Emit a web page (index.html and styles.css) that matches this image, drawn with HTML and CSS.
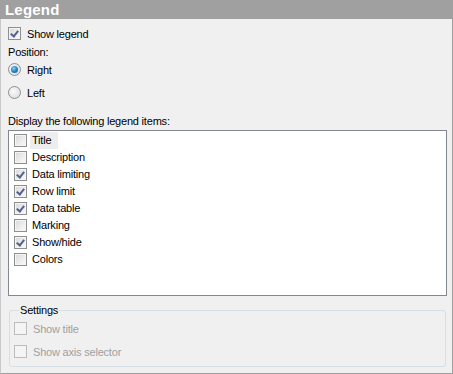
FILE: index.html
```html
<!DOCTYPE html>
<html lang="en">
<head>
  <meta charset="UTF-8">
  <title>Legend</title>
  <link rel="stylesheet" href="styles.css">
</head>
<body>
  <div class="panel">
    <!-- Header -->
    <div class="panel-title">Legend</div>

    <div class="panel-body">
      <div class="row show-legend">
        <span class="check checked"></span>
        <span class="text">Show legend</span>
      </div>

      <div class="label position-label">Position:</div>

      <div class="row radio-row first">
        <span class="radio selected"></span>
        <span class="text">Right</span>
      </div>
      <div class="row radio-row second">
        <span class="radio"></span>
        <span class="text">Left</span>
      </div>

      <div class="label items-label">Display the following legend items:</div>

      <!-- Legend items list -->
      <div class="listbox">
        <div class="item"><span class="check"></span><span class="text focused">Title</span></div>
        <div class="item"><span class="check"></span><span class="text">Description</span></div>
        <div class="item"><span class="check checked"></span><span class="text">Data limiting</span></div>
        <div class="item"><span class="check checked"></span><span class="text">Row limit</span></div>
        <div class="item"><span class="check checked"></span><span class="text">Data table</span></div>
        <div class="item"><span class="check"></span><span class="text">Marking</span></div>
        <div class="item"><span class="check checked"></span><span class="text">Show/hide</span></div>
        <div class="item"><span class="check"></span><span class="text">Colors</span></div>
      </div>

      <!-- Settings group -->
      <fieldset class="group">
        <legend>Settings</legend>
        <div class="row disabled">
          <span class="check"></span>
          <span class="text">Show title</span>
        </div>
        <div class="row disabled">
          <span class="check"></span>
          <span class="text">Show axis selector</span>
        </div>
      </fieldset>
    </div>
  </div>
</body>
</html>
```

FILE: styles.css
```css
/* General */
body {
  margin: 0;
  font-family: "Liberation Sans", Arial, sans-serif;
  font-size: 11px;
  letter-spacing: -0.2px;
  color: #000;
  background: #f0f0f0;
}

.panel {
  width: 453px;
  height: 374px;
  box-sizing: border-box;
  display: flex;
  flex-direction: column;
}

.panel-title {
  height: 19px;
  line-height: 19px;
  padding-left: 5px;
  background: #a0a0a0;
  color: #fff;
  font-size: 15px;
  font-weight: bold;
  letter-spacing: 0.2px;
}

.panel-body {
  flex: 1;
  border: 1px solid #a0a0a0;
  border-top: none;
  border-left-color: #c8c8c8;
  padding-left: 7px;
  padding-right: 5px;
}

/* Rows */
.row {
  display: flex;
  align-items: center;
  height: 17px;
  gap: 6px;
}

.show-legend {
  margin-top: 6px;
}

.label {
  height: 18px;
  line-height: 18px;
}

.position-label {
  margin-top: 1px;
}

.radio-row.second {
  margin-top: 6px;
}

.items-label {
  margin-top: 13px;
  height: 14px;
  line-height: 14px;
}

/* Checkbox */
.check {
  width: 13px;
  height: 13px;
  box-sizing: border-box;
  border: 1px solid #8e8f8f;
  background: linear-gradient(135deg, #d8d8d8 0%, #f0f0f0 65%, #fafafa 100%);
  box-shadow: inset 0 0 0 1px #f4f4f4;
  flex-shrink: 0;
  position: relative;
}

.check.checked::after {
  content: "";
  position: absolute;
  left: 3px;
  top: 1px;
  width: 3px;
  height: 6px;
  border: solid #52628f;
  border-width: 0 2px 2px 0;
  transform: rotate(38deg);
}

/* Radio */
.radio {
  width: 13px;
  height: 13px;
  box-sizing: border-box;
  border-radius: 50%;
  border: 1px solid #8e8f8f;
  background: radial-gradient(circle at 40% 40%, #fafafa 0%, #e6e6e6 60%, #d4d4d4 100%);
  flex-shrink: 0;
  position: relative;
}

.radio.selected::after {
  content: "";
  position: absolute;
  left: 2px;
  top: 2px;
  width: 7px;
  height: 7px;
  border-radius: 50%;
  background: radial-gradient(circle at 40% 35%, #8ed0f4 0%, #2b8ad0 45%, #104c80 100%);
}

/* List box */
.listbox {
  margin-top: 2px;
  height: 166px;
  box-sizing: border-box;
  border: 1px solid #828790;
  background: #fff;
  padding: 1px 0 0 5px;
}

.item {
  display: flex;
  align-items: center;
  height: 17px;
  gap: 3px;
}

.item .text {
  height: 17px;
  line-height: 17px;
  padding: 0 2px;
}

.item .text.focused {
  background: #ededed;
  padding-right: 7px;
}

/* Settings group */
.group {
  margin: 8px 1px 0 1px;
  height: 63px;
  box-sizing: border-box;
  border: 1px solid #d5dfe5;
  border-radius: 3px;
  padding: 0 0 0 4px;
}

.group legend {
  padding: 0 1px;
  margin-left: 5px;
  line-height: 13px;
}

.group .row {
  height: 23px;
}

.disabled .text {
  color: #a0a0a0;
}

.disabled .check {
  border-color: #bcbcbc;
  background: #f4f4f4;
  box-shadow: none;
}
```
